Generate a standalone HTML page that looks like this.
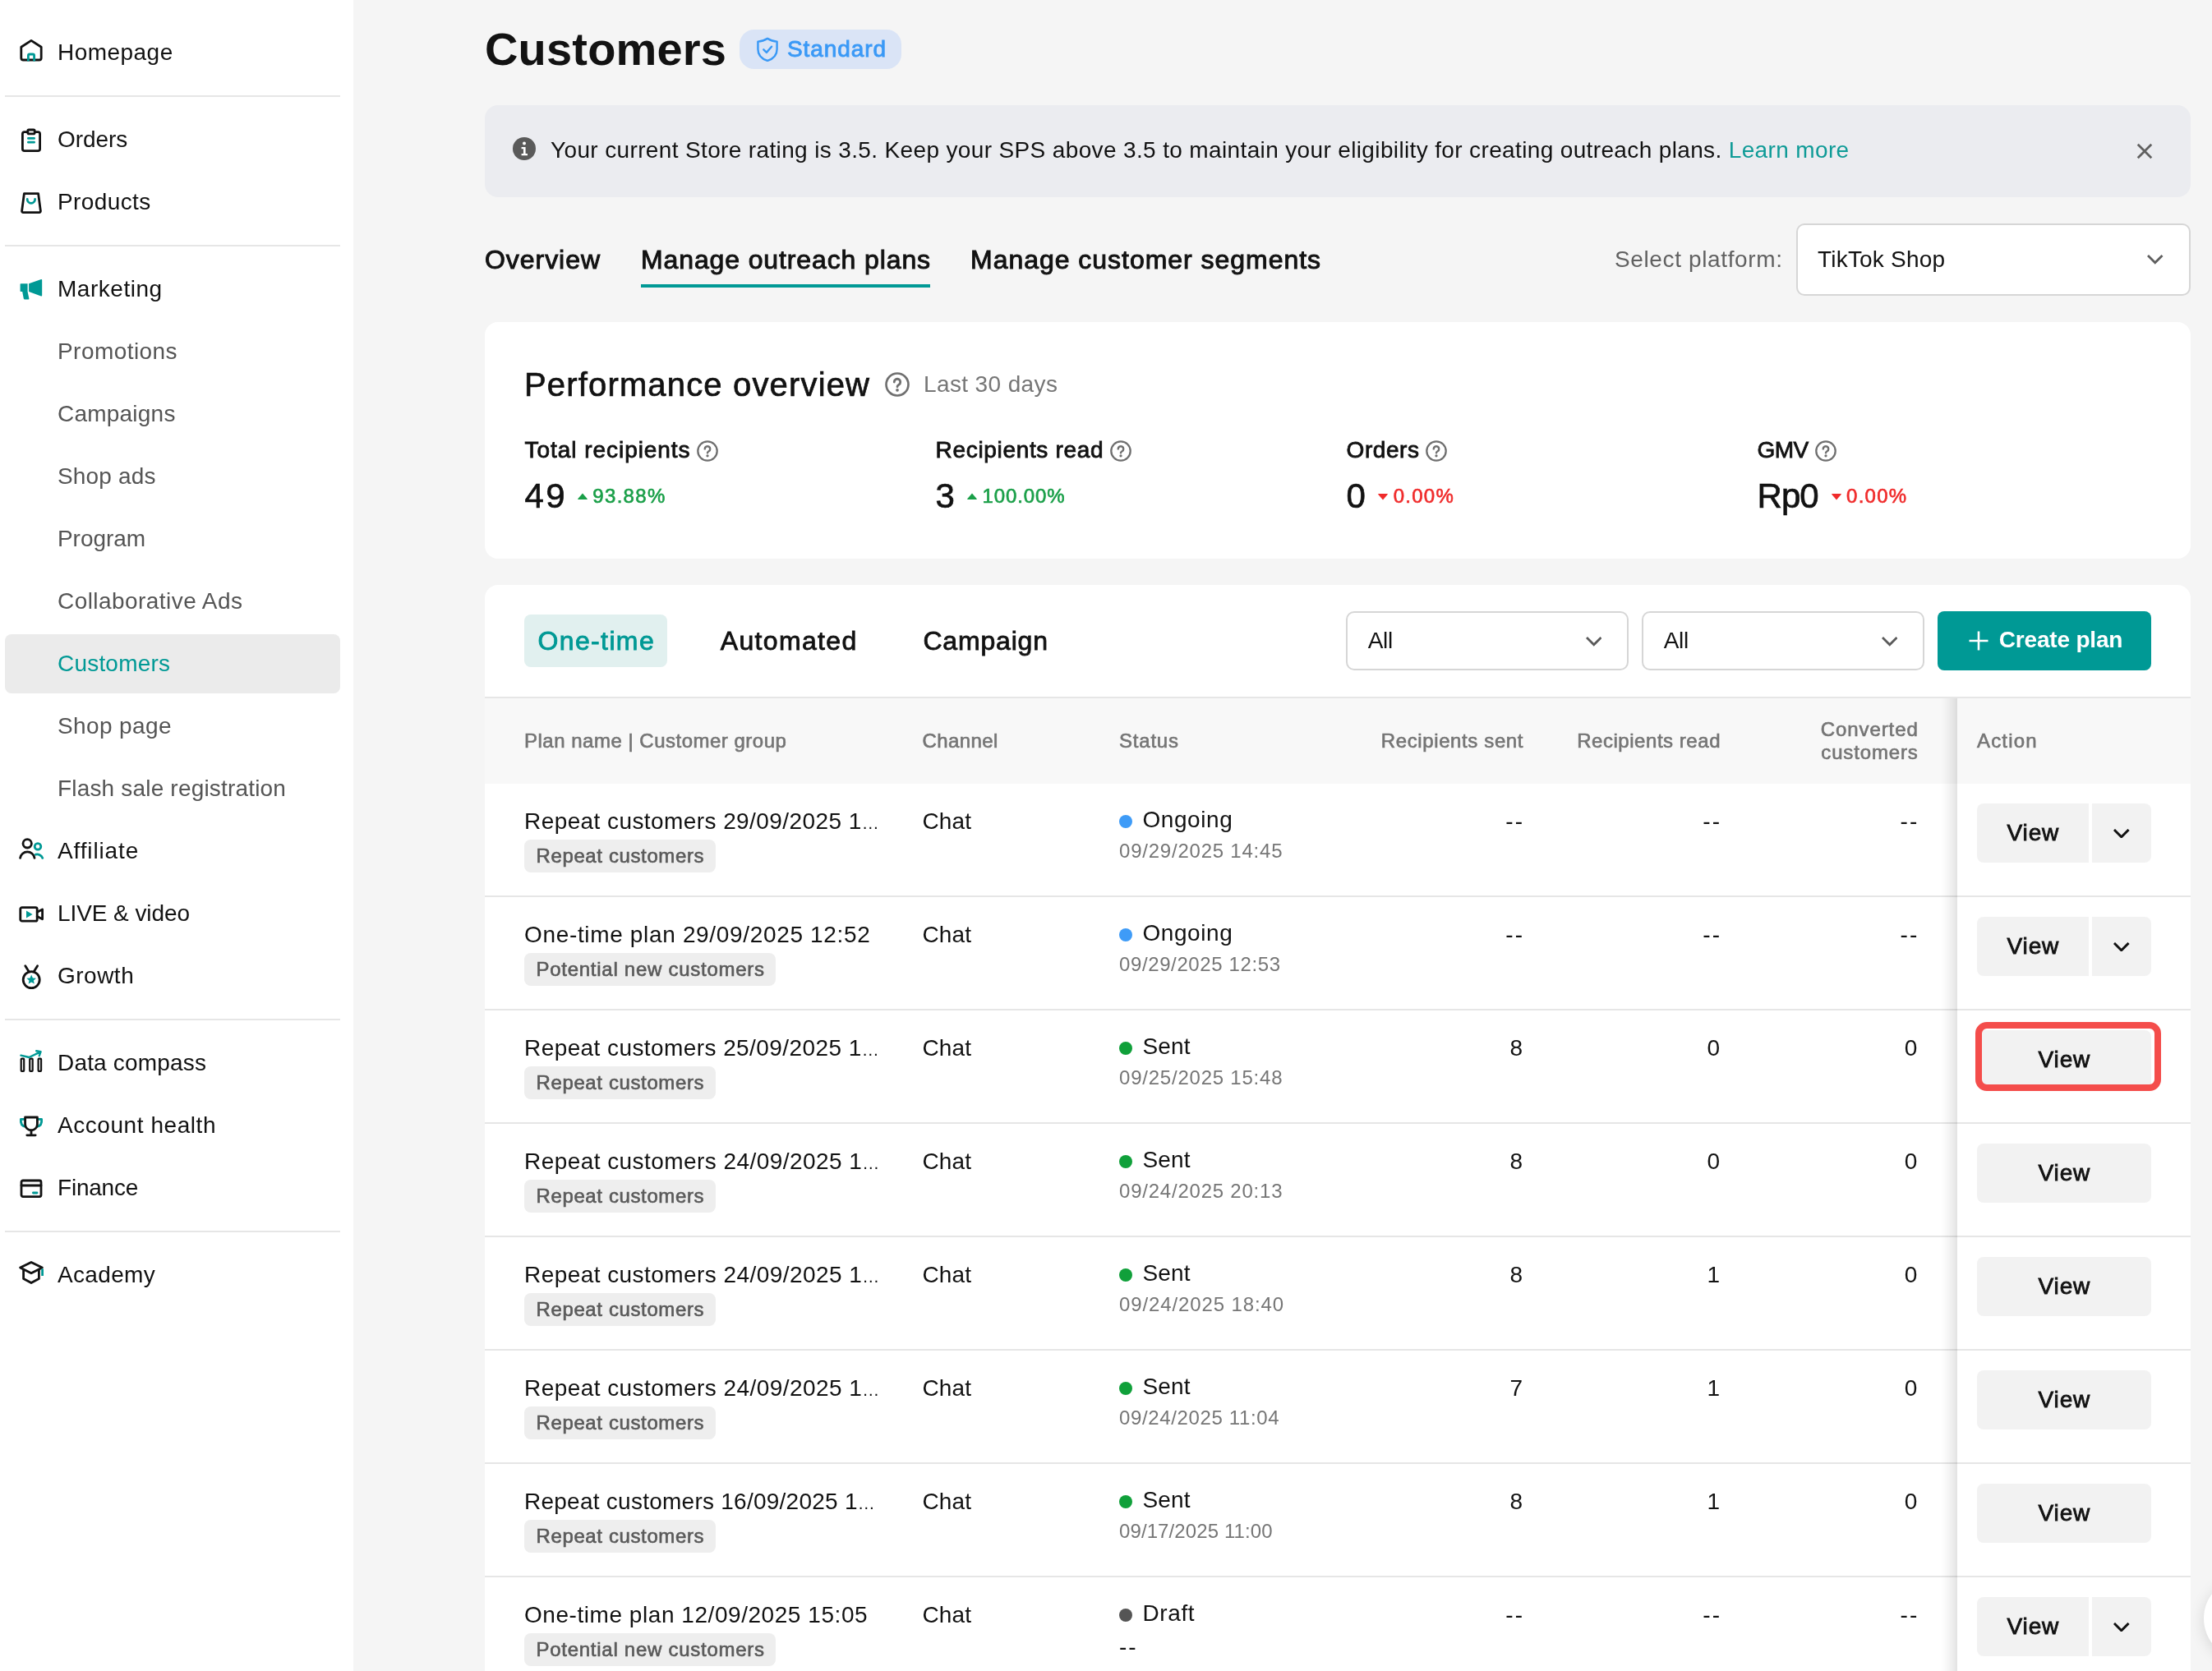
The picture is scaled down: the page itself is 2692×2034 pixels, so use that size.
<!DOCTYPE html>
<html lang="en">
<head>
<meta charset="utf-8">
<title>Customers</title>
<style>
*{box-sizing:border-box;margin:0;padding:0}
html,body{width:2692px;height:2034px;overflow:hidden;background:#f5f5f5}
body{font-family:"Liberation Sans",sans-serif;color:#121212;position:relative;font-size:28px}
.abs{position:absolute;white-space:nowrap}
.b{font-weight:bold}
.sb{-webkit-text-stroke:1px currentColor}
.md{-webkit-text-stroke:0.85px currentColor}
.md2{-webkit-text-stroke:0.7px currentColor}
.md3{-webkit-text-stroke:0.65px currentColor}
/* ---------- sidebar ---------- */
#side{will-change:transform;position:absolute;left:0;top:0;width:430px;height:2034px;background:#fff}
.nav{position:absolute;left:6px;width:408px;height:72px;border-radius:8px}
.nav span{position:absolute;left:64px;top:0;line-height:72px;font-size:28px;color:#121212;white-space:nowrap}
.nav.sub span{color:#555}
.nav.act{background:#ebebeb}
.nav.act span{color:#009995}
.nav svg{position:absolute;left:16px;top:20px;width:32px;height:32px;overflow:visible}
.hr{position:absolute;left:6px;width:408px;height:2px;background:#e6e6e6}
/* ---------- main ---------- */
#main{will-change:transform;position:absolute;left:0;top:0;width:2692px;height:2034px}
.card{position:absolute;left:590px;width:2076px;background:#fff;border-radius:16px}
</style>
</head>
<body>
<div id="side">
<!--NAV-->
<div class="nav" style="top:28px"><svg viewBox="0 0 32 32" fill="none" stroke="#121212" stroke-width="2.8" stroke-linejoin="round" stroke-linecap="round"><path d="M3.8 9.2 L16 1.4 L28.2 9.2 V22.4 a2.6 2.6 0 0 1 -2.6 2.6 H6.4 a2.6 2.6 0 0 1 -2.6 -2.6 Z"/><path d="M12.4 26.4 V19.6 a1.6 1.6 0 0 1 1.6 -1.6 h4 a1.6 1.6 0 0 1 1.6 1.6 V26.4" stroke="#009995" stroke-linecap="butt"/></svg><span style="letter-spacing:0.46px">Homepage</span></div>
<div class="hr" style="top:116px"></div>
<div class="nav" style="top:134px"><svg viewBox="0 0 32 32" fill="none" stroke="#121212" stroke-width="2.8" stroke-linejoin="round" stroke-linecap="round"><rect x="5.4" y="6.6" width="21.2" height="23" rx="2.4"/><rect x="11.8" y="4" width="8.4" height="4.8" rx="1.4" fill="#fff"/><path d="M12.4 14.4 h7.2 M12.4 19.2 h7.2" stroke="#009995"/></svg><span style="letter-spacing:-0.04px">Orders</span></div>
<div class="nav" style="top:210px"><svg viewBox="0 0 32 32" fill="none" stroke="#121212" stroke-width="2.8" stroke-linejoin="round" stroke-linecap="round"><path d="M7.4 5.6 H24.6 L27.4 26.8 a1.6 1.6 0 0 1 -1.6 1.8 H6.2 a1.6 1.6 0 0 1 -1.6 -1.8 Z"/><path d="M11.2 12.4 a4.7 4.9 0 0 0 9.4 0" stroke="#009995"/></svg><span style="letter-spacing:0.4px">Products</span></div>
<div class="hr" style="top:298px"></div>
<div class="nav" style="top:316px"><svg viewBox="0 1 32 32" fill="#009995"><path d="M3.4 10.3 H11.6 V20 L13.4 28.4 a0.9 0.9 0 0 1 -0.9 1 H7.8 a1 1 0 0 1 -1 -0.8 L5.2 20 H3.4 a0.8 0.8 0 0 1 -0.8 -0.8 V11.1 a0.8 0.8 0 0 1 0.8 -0.8 Z"/><path d="M13.1 10.3 L28 5 a0.9 0.9 0 0 1 1.2 0.8 V24.6 a0.9 0.9 0 0 1 -1.2 0.8 L13.1 20 Z"/></svg><span style="letter-spacing:0.53px">Marketing</span></div>
<div class="nav sub" style="top:392px"><span style="letter-spacing:0.44px">Promotions</span></div>
<div class="nav sub" style="top:468px"><span style="letter-spacing:0.22px">Campaigns</span></div>
<div class="nav sub" style="top:544px"><span style="letter-spacing:0.18px">Shop ads</span></div>
<div class="nav sub" style="top:620px"><span style="letter-spacing:-0.06px">Program</span></div>
<div class="nav sub" style="top:696px"><span style="letter-spacing:0.44px">Collaborative Ads</span></div>
<div class="nav sub act" style="top:772px"><span style="letter-spacing:0.2px">Customers</span></div>
<div class="nav sub" style="top:848px"><span style="letter-spacing:0.39px">Shop page</span></div>
<div class="nav sub" style="top:924px"><span style="letter-spacing:0.18px">Flash sale registration</span></div>
<div class="nav" style="top:1000px"><svg viewBox="0 1 32 32" fill="none" stroke="#121212" stroke-width="2.8" stroke-linejoin="round" stroke-linecap="round"><circle cx="11.2" cy="7.8" r="5.2"/><path d="M2.6 25.4 a8.8 8.8 0 0 1 17.4 0"/><circle cx="24" cy="11.4" r="3.8" stroke="#009995"/><path d="M21.4 21.2 a7 7 0 0 1 8.4 4.2" stroke="#009995"/></svg><span style="letter-spacing:0.87px">Affiliate</span></div>
<div class="nav" style="top:1076px"><svg viewBox="0 0 32 32" fill="none" stroke="#121212" stroke-width="2.8" stroke-linejoin="round" stroke-linecap="round"><rect x="2.8" y="8.6" width="20.4" height="16.6" rx="2"/><path d="M23.2 14.2 L29.6 11 V22.8 L23.2 19.6"/><path d="M10 12.6 L17.6 17 L10 21.4 Z" fill="#009995" stroke="none"/></svg><span style="letter-spacing:-0.08px">LIVE &amp; video</span></div>
<div class="nav" style="top:1152px"><svg viewBox="0 0 32 32" fill="none" stroke="#121212" stroke-width="2.8" stroke-linejoin="round" stroke-linecap="round"><circle cx="16.2" cy="20.6" r="10"/><path d="M8.8 3.8 L13.2 10.8 M23.6 3.8 L19.2 10.8"/><path d="M16.2 14.6 L17.9 18.4 L22 18.8 L18.9 21.6 L19.8 25.6 L16.2 23.5 L12.6 25.6 L13.5 21.6 L10.4 18.8 L14.5 18.4 Z" fill="#009995" stroke="none"/></svg><span style="letter-spacing:0.49px">Growth</span></div>
<div class="hr" style="top:1240px"></div>
<div class="nav" style="top:1258px"><svg viewBox="0 0 32 32" fill="none" stroke="#121212" stroke-width="2.8" stroke-linejoin="round" stroke-linecap="round"><g stroke-width="2.2"><rect x="3.7" y="10.7" width="3.5" height="15.1" rx="0.8"/><rect x="14.2" y="10.7" width="3.5" height="15.1" rx="0.8"/><rect x="24.6" y="10.7" width="3.5" height="15.1" rx="0.8"/></g><path d="M3.4 6.6 L13.4 9 L26.8 2.6 M22.2 1.2 L27.6 2.2 L25.8 7.2" stroke="#009995" stroke-width="2.4"/></svg><span style="letter-spacing:0.18px">Data compass</span></div>
<div class="nav" style="top:1334px"><svg viewBox="0 2 32 32" fill="none" stroke="#121212" stroke-width="2.8" stroke-linejoin="round" stroke-linecap="round"><path d="M8.6 10.4 H3.4 c-0.6 5 1.4 8.4 6 9 M23.4 10.4 H28.6 c0.6 5 -1.4 8.4 -6 9" stroke="#009995"/><path d="M8.6 8 H23.4 V16.4 a7.4 7.4 0 0 1 -14.8 0 Z" fill="#fff"/><path d="M16 24 V29.6 M10.8 29.8 H21.2"/></svg><span style="letter-spacing:0.56px">Account health</span></div>
<div class="nav" style="top:1410px"><svg viewBox="0 2 32 32" fill="none" stroke="#121212" stroke-width="2.8" stroke-linejoin="round" stroke-linecap="round"><rect x="4" y="9" width="24" height="19.6" rx="2"/><path d="M4 15 H28"/><path d="M18.4 24 H23" stroke="#009995"/></svg><span style="letter-spacing:-0.22px">Finance</span></div>
<div class="hr" style="top:1498px"></div>
<div class="nav" style="top:1516px"><svg viewBox="0 2 32 32" fill="none" stroke="#121212" stroke-width="2.8" stroke-linejoin="round" stroke-linecap="round"><path d="M2.6 9 L16 2.4 L29.4 9 L16 15.8 Z"/><path d="M6.6 11.4 V22.6 L16 27.6 L25.4 22.6 V11.4"/><path d="M29.6 10.4 V19" stroke="#009995" stroke-linecap="butt"/></svg><span style="letter-spacing:0.33px">Academy</span></div>
<!--/NAV-->
</div>
<div id="main">
<!--MAIN-->
<div class="abs b" style="letter-spacing:0.18px;top:24px;font-size:56px;line-height:72px;left:590px;">Customers</div>
<div class="abs" style="left:900px;top:36px;width:197px;height:48px;border-radius:18px;background:#dae4f6"></div>
<svg class="abs" style="left:920px;top:44.5px;width:28px;height:30.8px" viewBox="0 0 30 33" fill="none" stroke="#3a99f6" stroke-width="2.6" stroke-linejoin="round" stroke-linecap="round"><path d="M15 2 C11 4.6 7 5.8 2.6 6 V16 C2.6 23.6 8 28.6 15 31 C22 28.6 27.4 23.6 27.4 16 V6 C23 5.8 19 4.6 15 2 Z"/><path d="M10 16.4 L13.8 20.2 L20.4 12.6"/></svg>
<div class="abs md" style="letter-spacing:0.91px;top:41.5px;font-size:28px;line-height:36px;left:958px;color:#3a99f6;">Standard</div>
<div class="abs" style="left:590px;top:128px;width:2076px;height:112px;border-radius:16px;background:#ebecf0"></div>
<svg class="abs" style="left:624px;top:167px;width:28px;height:28px" viewBox="0 0 28 28"><circle cx="14" cy="14" r="14" fill="#5a5a5a"/><circle cx="14" cy="7.6" r="2" fill="#fff"/><path d="M10.6 12 H15.6 V20 H18 V22.2 H10.6 V20 H13 V14.2 H10.6 Z" fill="#fff"/></svg>
<div class="abs" style="letter-spacing:0.36px;top:165px;font-size:28px;line-height:36px;left:670px;">Your current Store rating is 3.5. Keep your SPS above 3.5 to maintain your eligibility for creating outreach plans. <span style="color:#0f9b97">Learn more</span></div>
<svg class="abs" style="left:2599px;top:173px;width:22px;height:22px" viewBox="0 0 24 24" fill="none" stroke="#606060" stroke-width="3"><path d="M3 3 L21 21 M21 3 L3 21"/></svg>
<div class="abs sb" style="letter-spacing:0.95px;top:294px;font-size:32px;line-height:44px;left:590px;">Overview</div>
<div class="abs sb" style="letter-spacing:0.88px;top:294px;font-size:32px;line-height:44px;left:780px;">Manage outreach plans</div>
<div class="abs sb" style="letter-spacing:0.97px;top:294px;font-size:32px;line-height:44px;left:1181px;">Manage customer segments</div>
<div class="abs" style="left:780px;top:346px;width:352px;height:4px;background:#009995"></div>
<div class="abs" style="letter-spacing:0.63px;top:298px;font-size:28px;line-height:36px;left:1965px;color:#616161;">Select platform:</div>
<div class="abs" style="left:2186px;top:272px;width:480px;height:88px;border-radius:10px;background:#fff;border:2px solid #d6d6d6"></div>
<div class="abs" style="letter-spacing:0.2px;top:298px;font-size:28px;line-height:36px;left:2212px;">TikTok Shop</div>
<svg class="abs" style="left:2613.25px;top:310.425px;width:19.5px;height:11.75px" viewBox="-2 -2 19.5 11.75" fill="none" stroke="#5e5e5e" stroke-width="2.8" stroke-linecap="square" stroke-linejoin="miter"><path d="M0 0 L7.75 7.75 L15.5 0"/></svg>
<div class="card" style="top:392px;height:288px"></div>
<div class="abs md2" style="letter-spacing:1.16px;top:442px;font-size:40px;line-height:52px;left:638px;">Performance overview</div>
<svg class="abs" style="left:1077px;top:453px;width:30px;height:30px" viewBox="0 0 32 32" fill="none" stroke="#6f6f6f" stroke-width="2.8" stroke-linecap="round"><circle cx="16" cy="16" r="14.4"/><path d="M12 12.8 a4 4 0 1 1 6 3.5 c-1.4 0.8 -2 1.4 -2 2.6" stroke-width="3"/><circle cx="16" cy="23.2" r="2" fill="#6f6f6f" stroke="none"/></svg>
<div class="abs" style="letter-spacing:0.38px;top:450px;font-size:28px;line-height:36px;left:1124px;color:#767676;">Last 30 days</div>
<div class="abs md" style="letter-spacing:0.95px;top:529.5px;font-size:28px;line-height:36px;left:638.6px;">Total recipients</div>
<svg class="abs" style="left:847.6px;top:535.5px;width:26px;height:26px" viewBox="0 0 32 32" fill="none" stroke="#6f6f6f" stroke-width="2.8" stroke-linecap="round"><circle cx="16" cy="16" r="14.4"/><path d="M12 12.8 a4 4 0 1 1 6 3.5 c-1.4 0.8 -2 1.4 -2 2.6" stroke-width="3"/><circle cx="16" cy="23.2" r="2" fill="#6f6f6f" stroke="none"/></svg>
<div class="abs md2" style="letter-spacing:2.2px;top:578px;font-size:42px;line-height:52px;left:638.6px;">49</div>
<svg class="abs" style="left:702.8px;top:600px;width:12px;height:8px" viewBox="0 0 12 8"><path d="M6 0.4 L11.8 7.2 Q12 8 11.2 8 H0.8 Q0 8 0.2 7.2 Z" fill="#1a9f48"/></svg>
<div class="abs md3" style="letter-spacing:1.32px;top:587.5px;font-size:24px;line-height:31px;left:721.3px;color:#1a9f48;">93.88%</div>
<div class="abs md" style="letter-spacing:0.67px;top:529.5px;font-size:28px;line-height:36px;left:1138.6px;">Recipients read</div>
<svg class="abs" style="left:1350.6px;top:535.5px;width:26px;height:26px" viewBox="0 0 32 32" fill="none" stroke="#6f6f6f" stroke-width="2.8" stroke-linecap="round"><circle cx="16" cy="16" r="14.4"/><path d="M12 12.8 a4 4 0 1 1 6 3.5 c-1.4 0.8 -2 1.4 -2 2.6" stroke-width="3"/><circle cx="16" cy="23.2" r="2" fill="#6f6f6f" stroke="none"/></svg>
<div class="abs md2" style="letter-spacing:0px;top:578px;font-size:42px;line-height:52px;left:1138.6px;">3</div>
<svg class="abs" style="left:1177px;top:600px;width:12px;height:8px" viewBox="0 0 12 8"><path d="M6 0.4 L11.8 7.2 Q12 8 11.2 8 H0.8 Q0 8 0.2 7.2 Z" fill="#1a9f48"/></svg>
<div class="abs md3" style="letter-spacing:0.88px;top:587.5px;font-size:24px;line-height:31px;left:1195.5px;color:#1a9f48;">100.00%</div>
<div class="abs md" style="letter-spacing:0.56px;top:529.5px;font-size:28px;line-height:36px;left:1638.6px;">Orders</div>
<svg class="abs" style="left:1735px;top:535.5px;width:26px;height:26px" viewBox="0 0 32 32" fill="none" stroke="#6f6f6f" stroke-width="2.8" stroke-linecap="round"><circle cx="16" cy="16" r="14.4"/><path d="M12 12.8 a4 4 0 1 1 6 3.5 c-1.4 0.8 -2 1.4 -2 2.6" stroke-width="3"/><circle cx="16" cy="23.2" r="2" fill="#6f6f6f" stroke="none"/></svg>
<div class="abs md2" style="letter-spacing:0px;top:578px;font-size:42px;line-height:52px;left:1638.6px;">0</div>
<svg class="abs" style="left:1677.3px;top:601px;width:12px;height:8px" viewBox="0 0 12 8"><path d="M6 7.6 L11.8 0.8 Q12 0 11.2 0 H0.8 Q0 0 0.2 0.8 Z" fill="#f02b2b"/></svg>
<div class="abs md3" style="letter-spacing:1.23px;top:587.5px;font-size:24px;line-height:31px;left:1695.8px;color:#f02b2b;">0.00%</div>
<div class="abs md" style="letter-spacing:-0.54px;top:529.5px;font-size:28px;line-height:36px;left:2138.6px;">GMV</div>
<svg class="abs" style="left:2209.3px;top:535.5px;width:26px;height:26px" viewBox="0 0 32 32" fill="none" stroke="#6f6f6f" stroke-width="2.8" stroke-linecap="round"><circle cx="16" cy="16" r="14.4"/><path d="M12 12.8 a4 4 0 1 1 6 3.5 c-1.4 0.8 -2 1.4 -2 2.6" stroke-width="3"/><circle cx="16" cy="23.2" r="2" fill="#6f6f6f" stroke="none"/></svg>
<div class="abs md2" style="letter-spacing:-1.0px;top:578px;font-size:42px;line-height:52px;left:2138.6px;">Rp0</div>
<svg class="abs" style="left:2228.6px;top:601px;width:12px;height:8px" viewBox="0 0 12 8"><path d="M6 7.6 L11.8 0.8 Q12 0 11.2 0 H0.8 Q0 0 0.2 0.8 Z" fill="#f02b2b"/></svg>
<div class="abs md3" style="letter-spacing:1.23px;top:587.5px;font-size:24px;line-height:31px;left:2247.1px;color:#f02b2b;">0.00%</div>
<div class="card" style="top:712px;height:1400px"></div>
<div class="abs" style="left:638px;top:748px;width:174px;height:64px;border-radius:8px;background:#e1f0ef"></div>
<div class="abs md" style="letter-spacing:1.37px;top:757.5px;font-size:32px;line-height:44px;left:654.5px;color:#009995;">One-time</div>
<div class="abs md" style="letter-spacing:1.34px;top:757.5px;font-size:32px;line-height:44px;left:876.8px;">Automated</div>
<div class="abs md" style="letter-spacing:0.82px;top:757.5px;font-size:32px;line-height:44px;left:1123.4px;">Campaign</div>
<div class="abs" style="left:1638px;top:744px;width:344px;height:72px;border-radius:10px;background:#fff;border:2px solid #d6d6d6"></div>
<div class="abs" style="letter-spacing:-0.26px;top:762px;font-size:28px;line-height:36px;left:1664.7px;">All</div>
<svg class="abs" style="left:1929.85px;top:775.125px;width:19.5px;height:11.75px" viewBox="-2 -2 19.5 11.75" fill="none" stroke="#5a5a5a" stroke-width="2.8" stroke-linecap="square" stroke-linejoin="miter"><path d="M0 0 L7.75 7.75 L15.5 0"/></svg>
<div class="abs" style="left:1998px;top:744px;width:344px;height:72px;border-radius:10px;background:#fff;border:2px solid #d6d6d6"></div>
<div class="abs" style="letter-spacing:-0.26px;top:762px;font-size:28px;line-height:36px;left:2024.7px;">All</div>
<svg class="abs" style="left:2289.85px;top:775.125px;width:19.5px;height:11.75px" viewBox="-2 -2 19.5 11.75" fill="none" stroke="#5a5a5a" stroke-width="2.8" stroke-linecap="square" stroke-linejoin="miter"><path d="M0 0 L7.75 7.75 L15.5 0"/></svg>
<div class="abs" style="left:2358px;top:744px;width:260px;height:72px;border-radius:8px;background:#009995"></div>
<svg class="abs" style="left:2396px;top:768px;width:24px;height:24px" viewBox="0 0 24 24" fill="none" stroke="#fff" stroke-width="2.6"><path d="M12 0.5 V23.5 M0.5 12 H23.5"/></svg>
<div class="abs b" style="letter-spacing:-0.19px;top:761px;font-size:28px;line-height:36px;left:2432.8px;color:#fff;">Create plan</div>
<div class="abs" style="left:590px;top:848px;width:2076px;height:2px;background:#e6e6e6"></div>
<div class="abs" style="left:590px;top:850px;width:2076px;height:104px;background:#f8f8f8"></div>
<div class="abs md3" style="letter-spacing:0.5px;top:886px;font-size:24px;line-height:31px;left:638px;color:#757575;">Plan name | Customer group</div>
<div class="abs md3" style="letter-spacing:0.43px;top:886px;font-size:24px;line-height:31px;left:1122.4px;color:#757575;">Channel</div>
<div class="abs md3" style="letter-spacing:0.79px;top:886px;font-size:24px;line-height:31px;left:1362px;color:#757575;">Status</div>
<div class="abs md3" style="letter-spacing:0.62px;margin-right:-0.62px;top:886px;font-size:24px;line-height:31px;right:838.5px;color:#757575;">Recipients sent</div>
<div class="abs md3" style="letter-spacing:0.54px;margin-right:-0.54px;top:886px;font-size:24px;line-height:31px;right:598.5px;color:#757575;">Recipients read</div>
<div class="abs md3" style="letter-spacing:0.91px;margin-right:-0.91px;top:873.6px;font-size:24px;line-height:28px;right:358.2px;color:#757575;">Converted</div>
<div class="abs md3" style="letter-spacing:0.85px;margin-right:-0.85px;top:901.7px;font-size:24px;line-height:28px;right:358.2px;color:#757575;">customers</div>
<div class="abs" style="left:590px;top:1090px;width:2076px;height:2px;background:#e6e6e6"></div>
<div class="abs" style="letter-spacing:0.42px;top:981.5px;font-size:28px;line-height:36px;left:638px;">Repeat customers 29/09/2025 1<span style="font-size:21px;letter-spacing:0">…</span></div>
<div class="abs" style="left:638px;top:1022px;width:233px;height:40px;border-radius:8px;background:#eeeeee"></div>
<div class="abs md3" style="letter-spacing:0.62px;top:1025.8px;font-size:24px;line-height:31px;left:652.5px;color:#5a5a5a;">Repeat customers</div>
<div class="abs" style="letter-spacing:0.18px;top:981.5px;font-size:28px;line-height:36px;left:1122.4px;">Chat</div>
<div class="abs" style="left:1362px;top:991.5px;width:16px;height:16px;border-radius:8px;background:#3e9bf7"></div>
<div class="abs" style="letter-spacing:0.59px;top:979.5px;font-size:28px;line-height:36px;left:1390.4px;">Ongoing</div>
<div class="abs" style="letter-spacing:0.78px;top:1020px;font-size:24px;line-height:31px;left:1362px;color:#767676;">09/29/2025 14:45</div>
<div class="abs" style="letter-spacing:2.04px;margin-right:-2.04px;top:982px;font-size:28px;line-height:36px;right:839px;">--</div>
<div class="abs" style="letter-spacing:2.04px;margin-right:-2.04px;top:982px;font-size:28px;line-height:36px;right:599px;">--</div>
<div class="abs" style="letter-spacing:2.04px;margin-right:-2.04px;top:982px;font-size:28px;line-height:36px;right:358.7px;">--</div>
<div class="abs" style="left:590px;top:1228px;width:2076px;height:2px;background:#e6e6e6"></div>
<div class="abs" style="letter-spacing:0.66px;top:1119.5px;font-size:28px;line-height:36px;left:638px;">One-time plan 29/09/2025 12:52</div>
<div class="abs" style="left:638px;top:1160px;width:305.5px;height:40px;border-radius:8px;background:#eeeeee"></div>
<div class="abs md3" style="letter-spacing:0.73px;top:1163.8px;font-size:24px;line-height:31px;left:652.5px;color:#5a5a5a;">Potential new customers</div>
<div class="abs" style="letter-spacing:0.18px;top:1119.5px;font-size:28px;line-height:36px;left:1122.4px;">Chat</div>
<div class="abs" style="left:1362px;top:1129.5px;width:16px;height:16px;border-radius:8px;background:#3e9bf7"></div>
<div class="abs" style="letter-spacing:0.59px;top:1117.5px;font-size:28px;line-height:36px;left:1390.4px;">Ongoing</div>
<div class="abs" style="letter-spacing:0.61px;top:1158px;font-size:24px;line-height:31px;left:1362px;color:#767676;">09/29/2025 12:53</div>
<div class="abs" style="letter-spacing:2.04px;margin-right:-2.04px;top:1120px;font-size:28px;line-height:36px;right:839px;">--</div>
<div class="abs" style="letter-spacing:2.04px;margin-right:-2.04px;top:1120px;font-size:28px;line-height:36px;right:599px;">--</div>
<div class="abs" style="letter-spacing:2.04px;margin-right:-2.04px;top:1120px;font-size:28px;line-height:36px;right:358.7px;">--</div>
<div class="abs" style="left:590px;top:1366px;width:2076px;height:2px;background:#e6e6e6"></div>
<div class="abs" style="letter-spacing:0.42px;top:1257.5px;font-size:28px;line-height:36px;left:638px;">Repeat customers 25/09/2025 1<span style="font-size:21px;letter-spacing:0">…</span></div>
<div class="abs" style="left:638px;top:1298px;width:233px;height:40px;border-radius:8px;background:#eeeeee"></div>
<div class="abs md3" style="letter-spacing:0.62px;top:1301.8px;font-size:24px;line-height:31px;left:652.5px;color:#5a5a5a;">Repeat customers</div>
<div class="abs" style="letter-spacing:0.18px;top:1257.5px;font-size:28px;line-height:36px;left:1122.4px;">Chat</div>
<div class="abs" style="left:1362px;top:1267.5px;width:16px;height:16px;border-radius:8px;background:#10a03a"></div>
<div class="abs" style="letter-spacing:0.2px;top:1255.5px;font-size:28px;line-height:36px;left:1390.4px;">Sent</div>
<div class="abs" style="letter-spacing:0.78px;top:1296px;font-size:24px;line-height:31px;left:1362px;color:#767676;">09/25/2025 15:48</div>
<div class="abs" style="letter-spacing:0px;top:1258px;font-size:28px;line-height:36px;right:839px;">8</div>
<div class="abs" style="letter-spacing:0px;top:1258px;font-size:28px;line-height:36px;right:599px;">0</div>
<div class="abs" style="letter-spacing:0px;top:1258px;font-size:28px;line-height:36px;right:358.7px;">0</div>
<div class="abs" style="left:590px;top:1504px;width:2076px;height:2px;background:#e6e6e6"></div>
<div class="abs" style="letter-spacing:0.44px;top:1395.5px;font-size:28px;line-height:36px;left:638px;">Repeat customers 24/09/2025 1<span style="font-size:21px;letter-spacing:0">…</span></div>
<div class="abs" style="left:638px;top:1436px;width:233px;height:40px;border-radius:8px;background:#eeeeee"></div>
<div class="abs md3" style="letter-spacing:0.62px;top:1439.8px;font-size:24px;line-height:31px;left:652.5px;color:#5a5a5a;">Repeat customers</div>
<div class="abs" style="letter-spacing:0.18px;top:1395.5px;font-size:28px;line-height:36px;left:1122.4px;">Chat</div>
<div class="abs" style="left:1362px;top:1405.5px;width:16px;height:16px;border-radius:8px;background:#10a03a"></div>
<div class="abs" style="letter-spacing:0.2px;top:1393.5px;font-size:28px;line-height:36px;left:1390.4px;">Sent</div>
<div class="abs" style="letter-spacing:0.78px;top:1434px;font-size:24px;line-height:31px;left:1362px;color:#767676;">09/24/2025 20:13</div>
<div class="abs" style="letter-spacing:0px;top:1396px;font-size:28px;line-height:36px;right:839px;">8</div>
<div class="abs" style="letter-spacing:0px;top:1396px;font-size:28px;line-height:36px;right:599px;">0</div>
<div class="abs" style="letter-spacing:0px;top:1396px;font-size:28px;line-height:36px;right:358.7px;">0</div>
<div class="abs" style="left:590px;top:1642px;width:2076px;height:2px;background:#e6e6e6"></div>
<div class="abs" style="letter-spacing:0.44px;top:1533.5px;font-size:28px;line-height:36px;left:638px;">Repeat customers 24/09/2025 1<span style="font-size:21px;letter-spacing:0">…</span></div>
<div class="abs" style="left:638px;top:1574px;width:233px;height:40px;border-radius:8px;background:#eeeeee"></div>
<div class="abs md3" style="letter-spacing:0.62px;top:1577.8px;font-size:24px;line-height:31px;left:652.5px;color:#5a5a5a;">Repeat customers</div>
<div class="abs" style="letter-spacing:0.18px;top:1533.5px;font-size:28px;line-height:36px;left:1122.4px;">Chat</div>
<div class="abs" style="left:1362px;top:1543.5px;width:16px;height:16px;border-radius:8px;background:#10a03a"></div>
<div class="abs" style="letter-spacing:0.2px;top:1531.5px;font-size:28px;line-height:36px;left:1390.4px;">Sent</div>
<div class="abs" style="letter-spacing:0.88px;top:1572px;font-size:24px;line-height:31px;left:1362px;color:#767676;">09/24/2025 18:40</div>
<div class="abs" style="letter-spacing:0px;top:1534px;font-size:28px;line-height:36px;right:839px;">8</div>
<div class="abs" style="letter-spacing:0px;top:1534px;font-size:28px;line-height:36px;right:599px;">1</div>
<div class="abs" style="letter-spacing:0px;top:1534px;font-size:28px;line-height:36px;right:358.7px;">0</div>
<div class="abs" style="left:590px;top:1780px;width:2076px;height:2px;background:#e6e6e6"></div>
<div class="abs" style="letter-spacing:0.44px;top:1671.5px;font-size:28px;line-height:36px;left:638px;">Repeat customers 24/09/2025 1<span style="font-size:21px;letter-spacing:0">…</span></div>
<div class="abs" style="left:638px;top:1712px;width:233px;height:40px;border-radius:8px;background:#eeeeee"></div>
<div class="abs md3" style="letter-spacing:0.62px;top:1715.8px;font-size:24px;line-height:31px;left:652.5px;color:#5a5a5a;">Repeat customers</div>
<div class="abs" style="letter-spacing:0.18px;top:1671.5px;font-size:28px;line-height:36px;left:1122.4px;">Chat</div>
<div class="abs" style="left:1362px;top:1681.5px;width:16px;height:16px;border-radius:8px;background:#10a03a"></div>
<div class="abs" style="letter-spacing:0.2px;top:1669.5px;font-size:28px;line-height:36px;left:1390.4px;">Sent</div>
<div class="abs" style="letter-spacing:0.63px;top:1710px;font-size:24px;line-height:31px;left:1362px;color:#767676;">09/24/2025 11:04</div>
<div class="abs" style="letter-spacing:0px;top:1672px;font-size:28px;line-height:36px;right:839px;">7</div>
<div class="abs" style="letter-spacing:0px;top:1672px;font-size:28px;line-height:36px;right:599px;">1</div>
<div class="abs" style="letter-spacing:0px;top:1672px;font-size:28px;line-height:36px;right:358.7px;">0</div>
<div class="abs" style="left:590px;top:1918px;width:2076px;height:2px;background:#e6e6e6"></div>
<div class="abs" style="letter-spacing:0.25px;top:1809.5px;font-size:28px;line-height:36px;left:638px;">Repeat customers 16/09/2025 1<span style="font-size:21px;letter-spacing:0">…</span></div>
<div class="abs" style="left:638px;top:1850px;width:233px;height:40px;border-radius:8px;background:#eeeeee"></div>
<div class="abs md3" style="letter-spacing:0.62px;top:1853.8px;font-size:24px;line-height:31px;left:652.5px;color:#5a5a5a;">Repeat customers</div>
<div class="abs" style="letter-spacing:0.18px;top:1809.5px;font-size:28px;line-height:36px;left:1122.4px;">Chat</div>
<div class="abs" style="left:1362px;top:1819.5px;width:16px;height:16px;border-radius:8px;background:#10a03a"></div>
<div class="abs" style="letter-spacing:0.2px;top:1807.5px;font-size:28px;line-height:36px;left:1390.4px;">Sent</div>
<div class="abs" style="letter-spacing:0.1px;top:1848px;font-size:24px;line-height:31px;left:1362px;color:#767676;">09/17/2025 11:00</div>
<div class="abs" style="letter-spacing:0px;top:1810px;font-size:28px;line-height:36px;right:839px;">8</div>
<div class="abs" style="letter-spacing:0px;top:1810px;font-size:28px;line-height:36px;right:599px;">1</div>
<div class="abs" style="letter-spacing:0px;top:1810px;font-size:28px;line-height:36px;right:358.7px;">0</div>
<div class="abs" style="left:590px;top:2056px;width:2076px;height:2px;background:#e6e6e6"></div>
<div class="abs" style="letter-spacing:0.55px;top:1947.5px;font-size:28px;line-height:36px;left:638px;">One-time plan 12/09/2025 15:05</div>
<div class="abs" style="left:638px;top:1988px;width:305.5px;height:40px;border-radius:8px;background:#eeeeee"></div>
<div class="abs md3" style="letter-spacing:0.73px;top:1991.8px;font-size:24px;line-height:31px;left:652.5px;color:#5a5a5a;">Potential new customers</div>
<div class="abs" style="letter-spacing:0.18px;top:1947.5px;font-size:28px;line-height:36px;left:1122.4px;">Chat</div>
<div class="abs" style="left:1362px;top:1957.5px;width:16px;height:16px;border-radius:8px;background:#555"></div>
<div class="abs" style="letter-spacing:0.63px;top:1945.5px;font-size:28px;line-height:36px;left:1390.4px;">Draft</div>
<div class="abs" style="letter-spacing:2.04px;top:1987px;font-size:28px;line-height:36px;left:1362px;color:#121212;">--</div>
<div class="abs" style="letter-spacing:2.04px;margin-right:-2.04px;top:1948px;font-size:28px;line-height:36px;right:839px;">--</div>
<div class="abs" style="letter-spacing:2.04px;margin-right:-2.04px;top:1948px;font-size:28px;line-height:36px;right:599px;">--</div>
<div class="abs" style="letter-spacing:2.04px;margin-right:-2.04px;top:1948px;font-size:28px;line-height:36px;right:358.7px;">--</div>
<div class="abs" style="left:2362px;top:850px;width:20px;height:1200px;background:linear-gradient(to right,rgba(0,0,0,0),rgba(0,0,0,0.03) 40%,rgba(0,0,0,0.11))"></div>
<div class="abs" style="left:2382px;top:850px;width:284px;height:104px;background:#f8f8f8"></div>
<div class="abs" style="left:2382px;top:954px;width:284px;height:1100px;background:#fff"></div>
<div class="abs md3" style="letter-spacing:1.18px;top:886px;font-size:24px;line-height:31px;left:2406px;color:#757575;">Action</div>
<div class="abs" style="left:2382px;top:1090px;width:284px;height:2px;background:#e6e6e6"></div>
<div class="abs" style="left:2406px;top:978px;width:136px;height:72px;border-radius:8px 0 0 8px;background:#f2f2f2"></div>
<div class="abs" style="left:2546px;top:978px;width:72px;height:72px;border-radius:0 8px 8px 0;background:#f2f2f2"></div>
<div class="abs md" style="letter-spacing:0.84px;top:996px;font-size:28px;line-height:36px;left:2442.6px;">View</div>
<svg class="abs" style="left:2572.25px;top:1008.62px;width:19.5px;height:11.75px" viewBox="-2 -2 19.5 11.75" fill="none" stroke="#121212" stroke-width="3" stroke-linecap="square" stroke-linejoin="miter"><path d="M0 0 L7.75 7.75 L15.5 0"/></svg>
<div class="abs" style="left:2382px;top:1228px;width:284px;height:2px;background:#e6e6e6"></div>
<div class="abs" style="left:2406px;top:1116px;width:136px;height:72px;border-radius:8px 0 0 8px;background:#f2f2f2"></div>
<div class="abs" style="left:2546px;top:1116px;width:72px;height:72px;border-radius:0 8px 8px 0;background:#f2f2f2"></div>
<div class="abs md" style="letter-spacing:0.84px;top:1134px;font-size:28px;line-height:36px;left:2442.6px;">View</div>
<svg class="abs" style="left:2572.25px;top:1146.62px;width:19.5px;height:11.75px" viewBox="-2 -2 19.5 11.75" fill="none" stroke="#121212" stroke-width="3" stroke-linecap="square" stroke-linejoin="miter"><path d="M0 0 L7.75 7.75 L15.5 0"/></svg>
<div class="abs" style="left:2382px;top:1366px;width:284px;height:2px;background:#e6e6e6"></div>
<div class="abs" style="left:2406px;top:1254px;width:212px;height:72px;border-radius:8px;background:#f2f2f2"></div>
<div class="abs md" style="letter-spacing:0.84px;top:1272px;font-size:28px;line-height:36px;left:2480.6px;">View</div>
<div class="abs" style="left:2382px;top:1504px;width:284px;height:2px;background:#e6e6e6"></div>
<div class="abs" style="left:2406px;top:1392px;width:212px;height:72px;border-radius:8px;background:#f2f2f2"></div>
<div class="abs md" style="letter-spacing:0.84px;top:1410px;font-size:28px;line-height:36px;left:2480.6px;">View</div>
<div class="abs" style="left:2382px;top:1642px;width:284px;height:2px;background:#e6e6e6"></div>
<div class="abs" style="left:2406px;top:1530px;width:212px;height:72px;border-radius:8px;background:#f2f2f2"></div>
<div class="abs md" style="letter-spacing:0.84px;top:1548px;font-size:28px;line-height:36px;left:2480.6px;">View</div>
<div class="abs" style="left:2382px;top:1780px;width:284px;height:2px;background:#e6e6e6"></div>
<div class="abs" style="left:2406px;top:1668px;width:212px;height:72px;border-radius:8px;background:#f2f2f2"></div>
<div class="abs md" style="letter-spacing:0.84px;top:1686px;font-size:28px;line-height:36px;left:2480.6px;">View</div>
<div class="abs" style="left:2382px;top:1918px;width:284px;height:2px;background:#e6e6e6"></div>
<div class="abs" style="left:2406px;top:1806px;width:212px;height:72px;border-radius:8px;background:#f2f2f2"></div>
<div class="abs md" style="letter-spacing:0.84px;top:1824px;font-size:28px;line-height:36px;left:2480.6px;">View</div>
<div class="abs" style="left:2382px;top:2056px;width:284px;height:2px;background:#e6e6e6"></div>
<div class="abs" style="left:2406px;top:1944px;width:136px;height:72px;border-radius:8px 0 0 8px;background:#f2f2f2"></div>
<div class="abs" style="left:2546px;top:1944px;width:72px;height:72px;border-radius:0 8px 8px 0;background:#f2f2f2"></div>
<div class="abs md" style="letter-spacing:0.84px;top:1962px;font-size:28px;line-height:36px;left:2442.6px;">View</div>
<svg class="abs" style="left:2572.25px;top:1974.62px;width:19.5px;height:11.75px" viewBox="-2 -2 19.5 11.75" fill="none" stroke="#121212" stroke-width="3" stroke-linecap="square" stroke-linejoin="miter"><path d="M0 0 L7.75 7.75 L15.5 0"/></svg>
<div class="abs" style="left:2404px;top:1244px;width:226px;height:84px;border-radius:14px;border:8px solid #f44d4b"></div>
<div class="abs" style="left:2682px;top:1920px;width:100px;height:100px;border-radius:50px;background:#fff;box-shadow:0 4px 18px rgba(0,0,0,0.13)"></div>
<!--/MAIN-->
</div>
</body>
</html>
